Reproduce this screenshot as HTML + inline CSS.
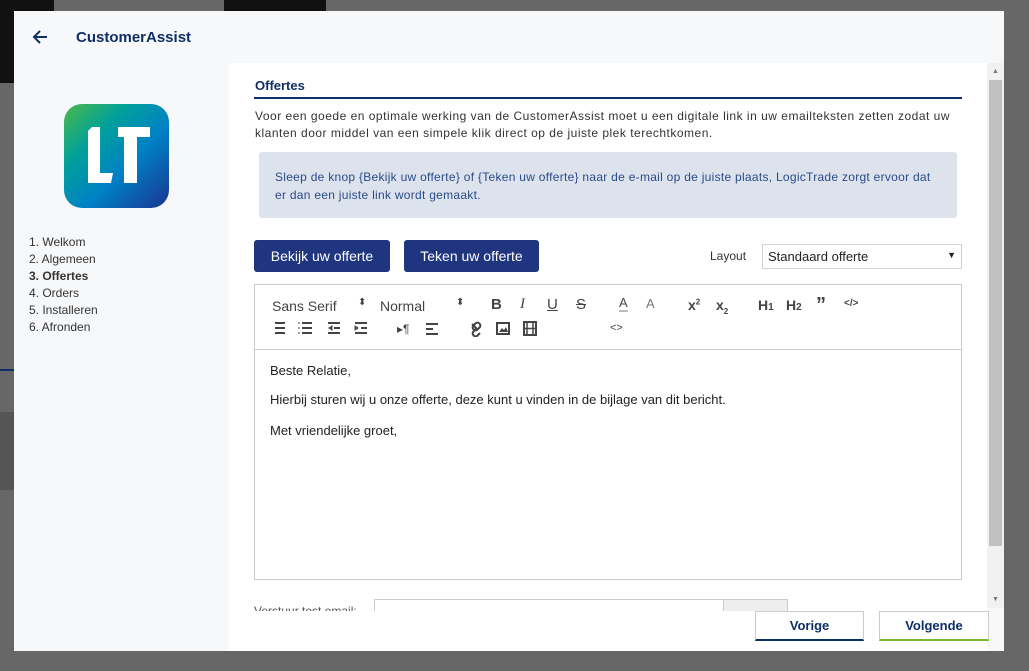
<!DOCTYPE html>
<html><head><meta charset="utf-8"><style>
*{box-sizing:border-box;margin:0;padding:0}
body{width:1029px;height:671px;background:#676767;position:relative;overflow:hidden;font-family:"Liberation Sans",sans-serif}
.abs{position:absolute}
.modal{left:14px;top:11px;width:990px;height:640px;background:#f7f8fa}
.nav{font-size:12px;color:#333;line-height:17px}
.t{color:#0e2f66}
.btn{background:#1f3580;color:#fff;font-size:14px;border-radius:3px;text-align:center;line-height:32px;height:32px}
.tb{font-size:13px;color:#444;position:absolute}
.ed{font-size:13px;color:#222}
</style></head><body>
<div class="abs" style="left:0;top:0;width:54px;height:11px;background:#111"></div>
<div class="abs" style="left:0;top:11px;width:14px;height:72px;background:#111"></div>
<div class="abs" style="left:224px;top:0;width:102px;height:11px;background:#111"></div>
<div class="abs" style="left:0;top:369px;width:14px;height:2px;background:#0e2f66"></div>
<div class="abs" style="left:0;top:412px;width:14px;height:78px;background:#555"></div>
<div class="abs modal"></div>
<svg class="abs" style="left:32px;top:29px" width="16" height="16"><path d="M15 8H2M8 2L2 8l6 6" stroke="#0e2f66" stroke-width="2" fill="none"/></svg>
<div class="abs t" style="left:76px;top:29px;font-size:15px;font-weight:bold">CustomerAssist</div>
<svg class="abs" style="left:64px;top:104px" width="105" height="104"><defs><linearGradient id="g" x1="0" y1="0" x2="1" y2="1"><stop offset="0" stop-color="#4cb848"/><stop offset=".3" stop-color="#00a19a"/><stop offset=".6" stop-color="#0080c6"/><stop offset="1" stop-color="#1a3590"/></linearGradient></defs><rect width="105" height="104" rx="18" fill="url(#g)"/><path d="M28 23h8v46h13l-2 10H24V27zM54 23h32v10H73v46H60V33H54z" fill="#fff"/></svg>
<div class="abs nav" style="left:29px;top:234px">1. Welkom<br>2. Algemeen<br><b>3. Offertes</b><br>4. Orders<br>5. Installeren<br>6. Afronden</div>
<div class="abs" style="left:229px;top:63px;width:758px;height:588px;background:#fff"></div>
<div class="abs" style="left:987px;top:63px;width:17px;height:545px;background:#f1f1f1"></div>
<div class="abs" style="left:989px;top:80px;width:13px;height:466px;background:#c1c1c1"></div>
<div class="abs" style="left:992px;top:68px;font-size:7px;color:#777">▲</div>
<div class="abs" style="left:992px;top:596px;font-size:7px;color:#777">▼</div>
<div class="abs t" style="left:255px;top:78px;font-size:13px;font-weight:bold">Offertes</div>
<div class="abs" style="left:254px;top:97px;width:708px;height:2px;background:#0e2f66"></div>
<div class="abs" style="left:255px;top:108px;font-size:12px;color:#333;line-height:17px;width:740px;letter-spacing:0.5px;white-space:nowrap">Voor een goede en optimale werking van de CustomerAssist moet u een digitale link in uw emailteksten zetten zodat uw<br>klanten door middel van een simpele klik direct op de juiste plek terechtkomen.</div>
<div class="abs" style="left:259px;top:152px;width:698px;height:66px;background:#dce3ec;border-radius:3px;padding:16px 16px;font-size:12px;line-height:18px;color:#2b4a8a;white-space:nowrap;letter-spacing:0.28px">Sleep de knop {Bekijk uw offerte} of {Teken uw offerte} naar de e-mail op de juiste plaats, LogicTrade zorgt ervoor dat<br>er dan een juiste link wordt gemaakt.</div>
<div class="abs btn" style="left:254px;top:240px;width:136px">Bekijk uw offerte</div>
<div class="abs btn" style="left:404px;top:240px;width:135px">Teken uw offerte</div>
<div class="abs" style="left:710px;top:249px;font-size:12px;color:#333">Layout</div>
<div class="abs" style="left:762px;top:244px;width:200px;height:25px;border:1px solid #ccd3dc;font-size:13px;color:#222;padding:4px 5px">Standaard offerte<span style="position:absolute;right:5px;top:5px;font-size:9px">▼</span></div>
<div class="abs" style="left:254px;top:284px;width:708px;height:296px;border:1px solid #ccc"></div>
<div class="abs" style="left:254px;top:349px;width:708px;height:1px;background:#ccc"></div>
<div class="tb" style="left:272px;top:298px;font-size:14px">Sans Serif</div>
<div class="tb" style="left:358px;top:297px;font-size:10px">⬍</div>
<div class="tb" style="left:380px;top:298px;font-size:14px">Normal</div>
<div class="tb" style="left:456px;top:297px;font-size:10px">⬍</div>
<div class="tb" style="left:491px;top:296px;font-size:15px;font-weight:bold">B</div>
<div class="tb" style="left:520px;top:296px;font-size:15px;font-style:italic;font-family:'Liberation Serif'">I</div>
<div class="tb" style="left:547px;top:296px;font-size:15px;text-decoration:underline">U</div>
<div class="tb" style="left:576px;top:296px;font-size:15px;text-decoration:line-through">S</div>
<div class="tb" style="left:619px;top:295px;font-size:13px;border-bottom:2px solid #bbb;line-height:15px">A</div>
<div class="tb" style="left:646px;top:296px;font-size:13px;color:#777">A</div>
<div class="tb" style="left:688px;top:297px;font-size:14px;font-weight:bold">x<sup style="font-size:8px">2</sup></div>
<div class="tb" style="left:716px;top:297px;font-size:14px;font-weight:bold">x<sub style="font-size:8px">2</sub></div>
<div class="tb" style="left:758px;top:297px;font-size:14px;font-weight:bold">H<span style="font-size:10px">1</span></div>
<div class="tb" style="left:786px;top:297px;font-size:14px;font-weight:bold">H<span style="font-size:10px">2</span></div>
<div class="tb" style="left:816px;top:294px;font-size:20px;font-weight:bold">”</div>
<div class="tb" style="left:844px;top:298px;font-size:10px;font-weight:bold">&lt;/&gt;</div>
<svg class="abs" style="left:270px;top:321px" width="280" height="16" fill="#444" stroke="#444">
<g stroke-width="2"><path d="M5 2h10M5 7h10M5 12h10M32 2h10M32 7h10M32 12h10M58 2h12M64 7h6M58 12h12M85 2h12M91 7h6M85 12h12M156 3h12M156 8h7M156 13h12"/></g>
<path d="M28 2h2M28 7h2M28 12h2M62 5l-3 2 3 2zM85 5l3 2-3 2z" stroke-width="1"/>
<text x="127" y="12" font-size="12" stroke="none" font-family="Liberation Sans">▸¶</text>
<path d="M202 3l6 6m-2 -7l-3 3a3 3 0 004 4l3-3a3 3 0 00-4-4zM206 8l-3 3a3 3 0 004 4l3-3" fill="none" stroke-width="2"/>
<rect x="227" y="2" width="12" height="11" fill="none" stroke-width="2"/><path d="M229 11l3-4 2 2 2-3 2 5z" stroke="none"/>
<rect x="254" y="1" width="12" height="13" fill="none" stroke-width="2"/><path d="M257 1v13M263 1v13M254 7.5h12" stroke-width="1.5"/>
</svg>
<div class="tb" style="left:610px;top:322px;font-size:11px">&lt;&gt;</div>
<div class="abs ed" style="left:270px;top:363px">Beste Relatie,</div>
<div class="abs ed" style="left:270px;top:392px">Hierbij sturen wij u onze offerte, deze kunt u vinden in de bijlage van dit bericht.</div>
<div class="abs ed" style="left:270px;top:423px">Met vriendelijke groet,</div>
<div class="abs" style="left:254px;top:604px;font-size:12px;color:#555;height:7px;overflow:hidden;line-height:14px">Verstuur test email:</div>
<div class="abs" style="left:374px;top:599px;width:350px;height:12px;border:1px solid #ccc;border-bottom:none"></div>
<div class="abs" style="left:723px;top:599px;width:65px;height:12px;border:1px solid #ccc;border-bottom:none;background:#eee"></div>
<div class="abs" style="left:229px;top:611px;width:758px;height:40px;background:#fff"></div>
<div class="abs t" style="left:755px;top:611px;width:109px;height:30px;border:1px solid #ccc;border-bottom:2px solid #0e2f66;background:#fff;text-align:center;line-height:28px;font-size:13px;font-weight:bold">Vorige</div>
<div class="abs t" style="left:879px;top:611px;width:110px;height:30px;border:1px solid #ccc;border-bottom:2px solid #7ab929;background:#fff;text-align:center;line-height:28px;font-size:13px;font-weight:bold">Volgende</div>
</body></html>
